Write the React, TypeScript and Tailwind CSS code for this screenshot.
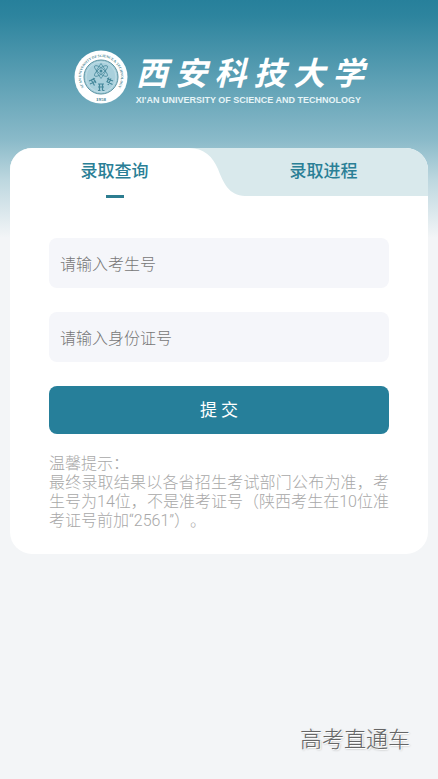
import { useState } from "react";

function Seal() {
  return (
    <svg viewBox="0 0 108 108" className="size-[54px] shrink-0" role="img" aria-label="西安科技大学校徽">
      <defs>
        <path id="seal-ring" d="M 28.3 84.6 A 40 40 0 1 1 79.7 84.6" />
      </defs>
      <circle cx="54" cy="54" r="53" fill="#fff" />
      <circle cx="54" cy="54" r="34" fill="#a9d0dc" stroke="#57909f" strokeWidth="2" />
      <circle cx="54" cy="54" r="30" fill="none" stroke="#d5e9ef" strokeWidth="1" />
      <text fontFamily="'Liberation Serif', serif" fontSize="7" fontWeight="700" fill="#457f90">
        <textPath href="#seal-ring" startOffset="50%" textAnchor="middle">
          XI'AN UNIVERSITY OF SCIENCE &amp; TECHNOLOGY
        </textPath>
      </text>
      <text x="54" y="101" textAnchor="middle" fontFamily="'Liberation Serif', serif" fontSize="10" fontWeight="700" fill="#457f90">
        1958
      </text>
      <g fill="none" stroke="#46889b" strokeWidth="1.5">
        <ellipse cx="54" cy="42" rx="16" ry="5.5" transform="rotate(38 54 42)" />
        <ellipse cx="54" cy="42" rx="16" ry="5.5" transform="rotate(-38 54 42)" />
        <path d="M54 27l10 15-10 15-10-15z" />
      </g>
      <circle cx="54" cy="42" r="3" fill="#46889b" />
      <g fill="none" stroke="#46889b" strokeWidth="2.4">
        <path d="M30 62l12-5M32 68l12-6M34 59l7 12M38 56l6 10" />
        <path d="M66 57l12 5M65 63l12 6M74 57l-6 13M70 55l-4 9" />
        <path d="M48 68h12M48 74h12M51 67v14M57 67v14M48 81h5M57 81h4" />
      </g>
    </svg>
  );
}

const tabs = ["录取查询", "录取进程"];

const fields = [
  { id: "candidate", label: "考生号", placeholder: "请输入考生号" },
  { id: "identity", label: "身份证号", placeholder: "请输入身份证号" },
];

export default function App() {
  const [active, setActive] = useState(0);
  return (
    <div className="flex min-h-screen flex-col bg-[#f3f5f7] bg-[linear-gradient(#27809b_0,#2d849e_16px,#8abac9_140px,#bdd7df_180px,#f3f5f7_238px)] font-['Noto_Sans_CJK_SC',sans-serif]">
      <header className="flex justify-center gap-2 pt-[50px] pb-11">
        <Seal />
        <div className="flex h-[54px] flex-col text-white">
          <h1 className="text-[32px] leading-[42px] font-bold whitespace-nowrap italic">西 安 科 技 大 学</h1>
          <p className="font-['Liberation_Sans',sans-serif] text-[9px] leading-4 font-bold whitespace-nowrap text-[#e6f4f7]">
            XI'AN UNIVERSITY OF SCIENCE AND TECHNOLOGY
          </p>
        </div>
      </header>

      <main className="mx-[10px] overflow-hidden rounded-[22px] bg-white">
        <div role="tablist" className="relative grid h-12 grid-cols-2 bg-[#d9e9ec]">
          <div aria-hidden="true" className={active === 0 ? "absolute inset-0 flex" : "absolute inset-0 flex -scale-x-100"}>
            <div className="w-[calc(50%-30px)] bg-white" />
            <svg viewBox="0 0 56 48" className="h-12 w-14 fill-white">
              <path d="M0 0C15 0 24 9 29 21C34 34 40 48 56 48H0Z" />
            </svg>
          </div>
          {tabs.map((tab, i) => (
            <button
              key={tab}
              type="button"
              role="tab"
              aria-selected={active === i}
              onClick={() => setActive(i)}
              className="relative flex h-12 items-center justify-center pb-1 text-[17px] font-medium text-[#2a7f96]"
            >
              {tab}
              {active === i && <span className="absolute top-[47px] h-[3px] w-[18px] bg-[#2d7d90]" />}
            </button>
          ))}
        </div>

        <form className="px-[39px] pt-[42px] pb-6" onSubmit={(e) => e.preventDefault()}>
          <div className="flex flex-col gap-6">
            {fields.map((f) => (
              <input
                key={f.id}
                id={f.id}
                type="text"
                aria-label={f.label}
                placeholder={f.placeholder}
                className="block h-[50px] w-full rounded-lg bg-[#f5f6fa] px-[11px] text-base font-light text-[#333] outline-none placeholder:text-[#777]"
              />
            ))}
          </div>
          <button type="submit" className="mt-6 block h-12 w-full rounded-lg bg-[#267f9a] pb-[2px] text-[17px] text-white">
            提 交
          </button>
          <div className="pt-5 text-justify font-[Roboto,'Noto_Sans_CJK_SC',sans-serif] text-base leading-[19px] font-light text-[#a8a8a8] [font-feature-settings:'chws'_0,'halt'_0] [font-kerning:none] [text-spacing-trim:space-all]">
            <p>温馨提示：</p>
            <p>
              最终录取结果以各省招生考试部门公布为准，考生号为14位，不是准考证号（陕西考生在10位准考证号前加“2561”）。
            </p>
          </div>
        </form>
      </main>

      <footer className="mt-auto flex justify-end pr-7 pb-[26px] text-[22px] leading-8 font-light text-[#666] [text-shadow:1px_1px_0_#fff,1px_1px_2px_#999]">
        高考直通车
      </footer>
    </div>
  );
}
